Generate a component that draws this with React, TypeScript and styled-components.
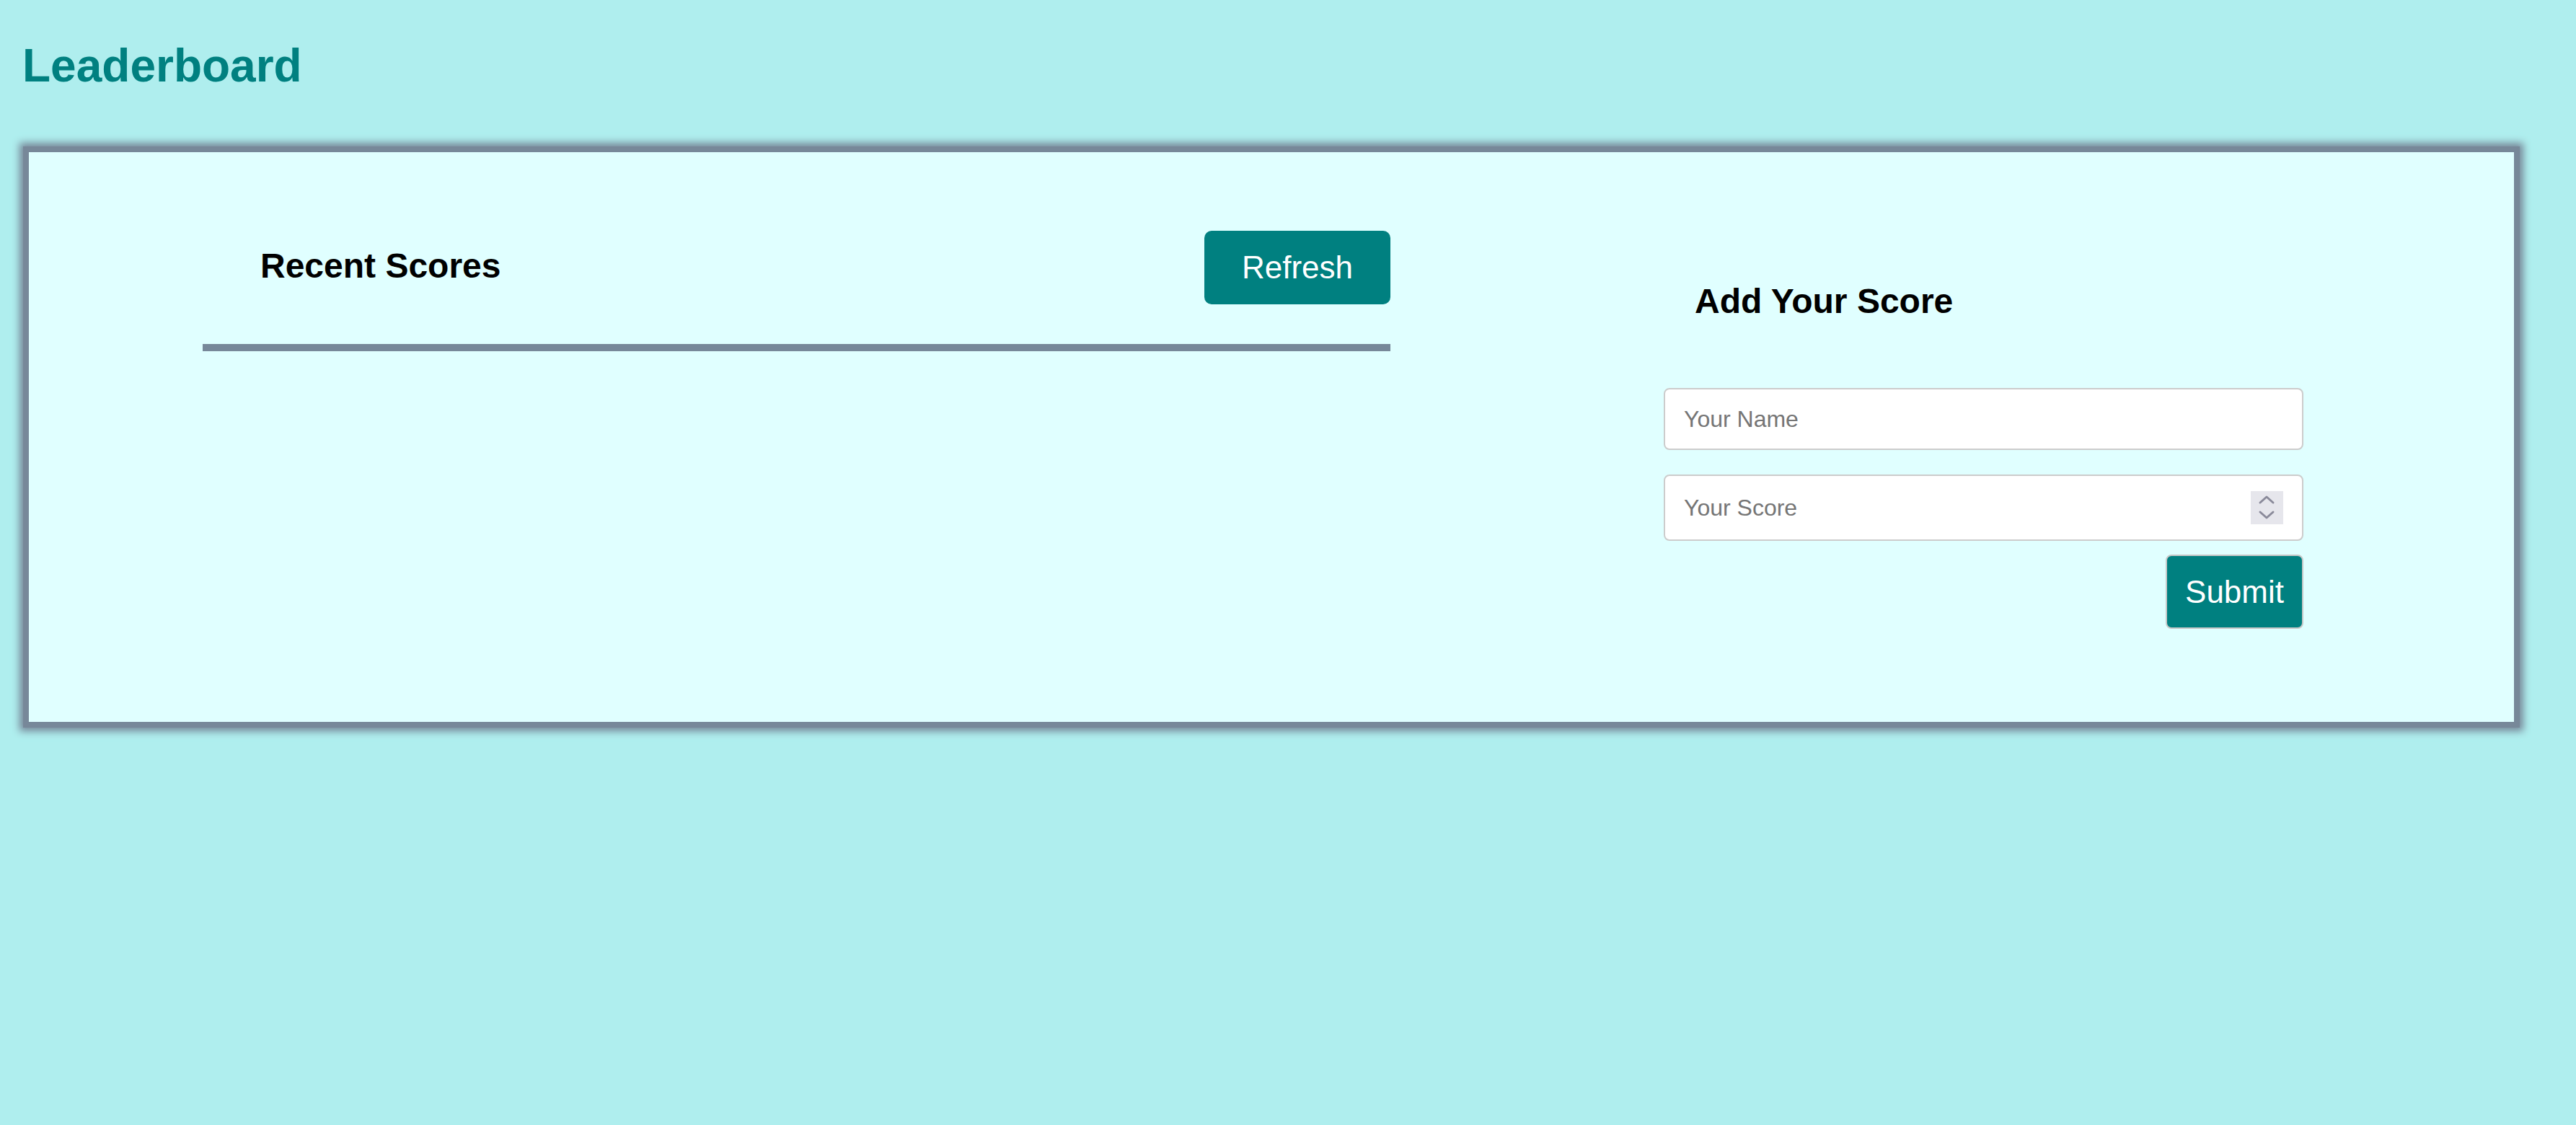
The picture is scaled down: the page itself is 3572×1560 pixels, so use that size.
import React from "react";
import styled, { createGlobalStyle } from "styled-components";

const GlobalStyle = createGlobalStyle`
  html, body {
    margin: 0;
    padding: 0;
    background: #afeeee;
    font-family: "Liberation Sans", Arial, sans-serif;
  }
  * { box-sizing: border-box; }
`;

const Page = styled.div`
  min-height: 100vh;
  padding-top: 54px;
  background: #afeeee;
`;

const Title = styled.h1`
  margin: 0 0 0 31px;
  font-size: 64px;
  font-weight: 700;
  line-height: normal;
  color: #008080;
`;

const Card = styled.section`
  margin: 75px 78px 0 32px;
  border: 8px solid #778899;
  box-shadow: 0 0 10px 5px #778899;
  background: #e0ffff;
  padding: 0 292px 129px 241px;
  display: flex;
  justify-content: space-between;
  align-items: flex-start;
`;

const ScoresColumn = styled.div`
  width: 1647px;
  margin-top: 109px;
`;

const ScoresHeader = styled.div`
  display: flex;
  justify-content: space-between;
  align-items: flex-start;
  padding-left: 80px;
`;

const SectionTitle = styled.h2<{ $indent?: number; $top?: number }>`
  margin: ${(p) => p.$top ?? 0}px 0 0 ${(p) => p.$indent ?? 0}px;
  font-size: 48px;
  font-weight: 700;
  line-height: normal;
  color: #000;
`;

const Button = styled.button<{ $bordered?: boolean }>`
  font-family: "Liberation Sans", Arial, sans-serif;
  font-size: 44px;
  line-height: normal;
  color: #fff;
  background: #008080;
  cursor: pointer;
  border: ${(p) => (p.$bordered ? "2px solid #c8c8c8" : "none")};
  border-radius: ${(p) => (p.$bordered ? "8px" : "10px")};
  padding: ${(p) => (p.$bordered ? "24.5px 25px" : "26px 52px")};
`;

const Divider = styled.div`
  height: 10px;
  margin-top: 55px;
  background: #778899;
`;

const FormColumn = styled.div`
  width: 887px;
  margin-top: 179px;
  display: flex;
  flex-direction: column;
`;

const Form = styled.form`
  display: flex;
  flex-direction: column;
  margin-top: 93px;
`;

const TextInput = styled.input`
  height: 86px;
  border: 2px solid #cccccc;
  border-radius: 8px;
  padding: 0 26px;
  background: #fff;
  font-family: "Liberation Sans", Arial, sans-serif;
  font-size: 32px;
  color: #000;
  outline: none;
  &::placeholder { color: #757575; }
`;

const ScoreField = styled.label`
  margin-top: 34px;
  height: 92px;
  display: flex;
  align-items: center;
  border: 2px solid #cccccc;
  border-radius: 8px;
  padding: 0 26px;
  background: #fff;
`;

const ScoreInput = styled.input`
  flex: 1;
  min-width: 0;
  border: none;
  outline: none;
  padding: 0;
  background: transparent;
  font-family: "Liberation Sans", Arial, sans-serif;
  font-size: 32px;
  color: #000;
  &::placeholder { color: #757575; }
`;

const Spinner = styled.span`
  width: 45px;
  height: 46px;
  flex: none;
  display: block;
  background: #e6e6ec;
`;

const SubmitRow = styled.div`
  display: flex;
  justify-content: flex-end;
  margin-top: 19px;
`;

export default function App() {
  return (
    <>
      <GlobalStyle />
      <Page>
        <Title>Leaderboard</Title>
        <Card>
          <ScoresColumn>
            <ScoresHeader>
              <SectionTitle $top={21}>Recent Scores</SectionTitle>
              <Button type="button">Refresh</Button>
            </ScoresHeader>
            <Divider />
          </ScoresColumn>
          <FormColumn>
            <SectionTitle $indent={43}>Add Your Score</SectionTitle>
            <Form onSubmit={(e) => e.preventDefault()}>
              <TextInput type="text" placeholder="Your Name" />
              <ScoreField>
                <ScoreInput type="text" inputMode="numeric" placeholder="Your Score" />
                <Spinner>
                  <svg width="45" height="46" viewBox="0 0 45 46">
                    <polyline
                      points="13,16 22,8 31,16"
                      fill="none"
                      stroke="#8a8a9a"
                      strokeWidth="3"
                      strokeLinecap="round"
                      strokeLinejoin="round"
                    />
                    <polyline
                      points="13,29 22,37 31,29"
                      fill="none"
                      stroke="#8a8a9a"
                      strokeWidth="3"
                      strokeLinecap="round"
                      strokeLinejoin="round"
                    />
                  </svg>
                </Spinner>
              </ScoreField>
              <SubmitRow>
                <Button type="submit" $bordered>
                  Submit
                </Button>
              </SubmitRow>
            </Form>
          </FormColumn>
        </Card>
      </Page>
    </>
  );
}
